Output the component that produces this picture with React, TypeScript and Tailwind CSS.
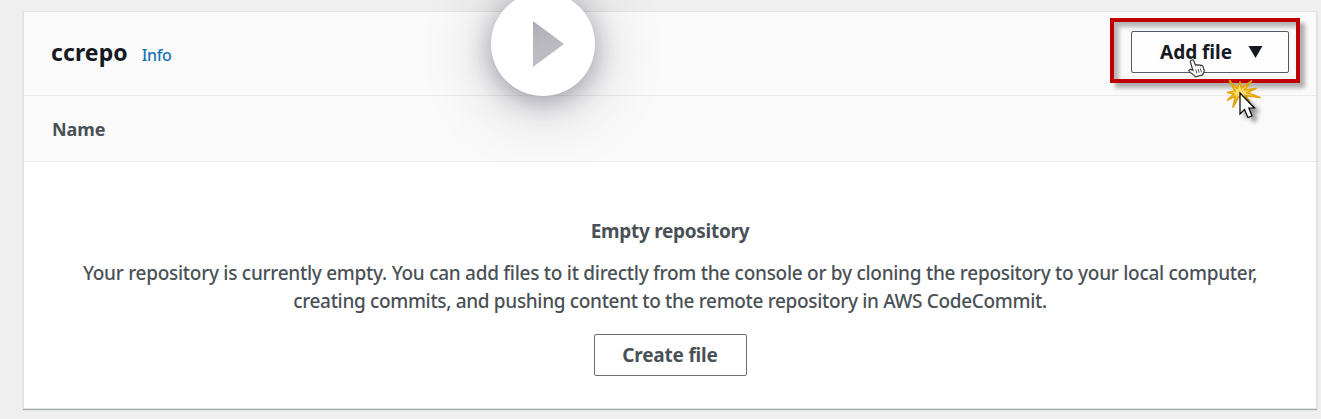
function PlayButton() {
  return (
    <div className="absolute left-[491px] top-[-8px] flex h-[104px] w-[104px] items-center justify-center rounded-full bg-white shadow-[0_5px_24px_rgba(45,40,75,0.34),0_8px_68px_rgba(40,40,50,0.28)]">
      <svg className="ml-[10px] h-[46px] w-[31px]" viewBox="0 0 31 46">
        <defs>
          <linearGradient id="play" x1="0.2" y1="0" x2="0.4" y2="1">
            <stop offset="0" stopColor="#aeadb7" />
            <stop offset="0.5" stopColor="#bab9c2" />
            <stop offset="1" stopColor="#bfbec6" />
          </linearGradient>
        </defs>
        <path d="M0 0L31 23L0 46Z" fill="url(#play)" />
      </svg>
    </div>
  );
}

function HandCursor() {
  return (
    <svg className="absolute left-[1188px] top-[59px] h-[19px] w-[18px]" viewBox="0 0 18 19">
      <path
        d="M3.2 1.2C4.2.4 5.3.9 5.8 2L7.5 6.2C8.2 5.4 9.4 5.5 9.9 6.3C10.7 5.5 11.9 5.7 12.4 6.6C13.5 5.9 14.7 6.4 15 7.6L16.2 11.5C16.5 13.2 14.8 14.2 14.7 16L7.5 17.8C6.6 15.8 3.5 14.8 1.4 12.6C.5 11.5 1.4 10.1 2.7 10.4L4.9 11.4L2.5 3.5C2.2 2.5 2.4 1.7 3.2 1.2Z"
        fill="white"
        stroke="#444"
        strokeWidth="1.3"
      />
      <path d="M7.7 10.4L8.8 14.3M10 9.9L11.1 13.8M12.3 9.4L13.4 13.2" stroke="#555" strokeWidth="1" />
    </svg>
  );
}

function ClickCursor() {
  return (
    <svg className="absolute left-[1222px] top-[75px] h-[50px] w-[46px]" viewBox="0 0 46 50">
      <path
        d="M7.5 5.5L15 13.5L18 7L19.5 13L29.5 6L22.5 15L34 13.5L25 17.5L38 22.5L23 20.5L27 26L19 21L16.5 22L11 32L13.5 21L5.5 25L12 19L5.5 17.5L13 16Z"
        fill="#f7dc6a"
        stroke="#e3a400"
        strokeWidth="1.7"
        strokeLinejoin="round"
      />
      <path
        d="M18 18V39L22.5 34.5L26 42.5L30 41L26.8 33H32.5Z"
        fill="white"
        stroke="black"
        strokeWidth="1.2"
        className="drop-shadow-[5px_4px_2px_rgba(0,0,0,0.4)]"
      />
    </svg>
  );
}

export default function App() {
  return (
    <div className="relative h-[419px] w-[1321px] overflow-hidden bg-[#efefef] pl-6 pr-[5px] pt-3 font-['Noto_Sans',sans-serif] text-[#495156]">
      <main className="flex h-[396px] flex-col bg-white shadow-[0_0_0_1px_#e0e2e3,0_1px_1px_1px_#a4afb0]">
        <header className="flex h-[84px] items-center justify-between border-b border-[#eaeaea] bg-[#fafafa] pl-[27px] pr-[27px]">
          <div className="mt-[-2px] flex items-baseline gap-[14px]">
            <h1 className="text-[23px] font-bold tracking-[0.1px] text-[#16191f]">ccrepo</h1>
            <a className="text-[16px] font-medium tracking-[-0.4px] text-[#1b75b1]">Info</a>
          </div>
          <button className="mt-[-4px] flex h-[42px] w-[158px] items-center rounded-[2px] border border-[#545b64] bg-[#fdfdfd] pl-7 pt-px text-[19px] font-bold text-[#16191f]">
            Add file
            <svg className="ml-4 h-3 w-[15px]" viewBox="0 0 15 12">
              <path d="M.5 0H14.5L7.5 12Z" fill="#16191f" />
            </svg>
          </button>
        </header>
        <div className="flex h-[66px] items-center border-b border-[#eaeaea] bg-[#fafafa] pl-7 pt-[2px] text-[18px] font-bold tracking-[-0.1px]">
          Name
        </div>
        <section className="flex flex-col items-center pt-[55px] text-center">
          <h2 className="text-[19px] font-bold leading-[28px] tracking-[-0.3px]">Empty repository</h2>
          <p className="mt-[14px] whitespace-nowrap text-[19px] font-medium leading-[28px]">
            <span className="tracking-[-0.275px]">
              Your repository is currently empty. You can add files to it directly from the console or by cloning the repository to your local computer,
            </span>
            <br />
            <span className="tracking-[-0.335px]">
              creating commits, and pushing content to the remote repository in AWS CodeCommit.
            </span>
          </p>
          <button className="mt-[19px] h-[42px] w-[153px] rounded-[2px] border border-[#6b7076] text-[19px] font-bold tracking-[-0.2px]">
            Create file
          </button>
        </section>
      </main>
      <PlayButton />
      <div className="absolute left-[1110px] top-[18px] h-[65px] w-[190px] border-4 border-[#c00000] shadow-[5px_5px_4px_rgba(0,0,0,0.3),inset_5px_5px_4px_rgba(0,0,0,0.27)]" />
      <HandCursor />
      <ClickCursor />
    </div>
  );
}
